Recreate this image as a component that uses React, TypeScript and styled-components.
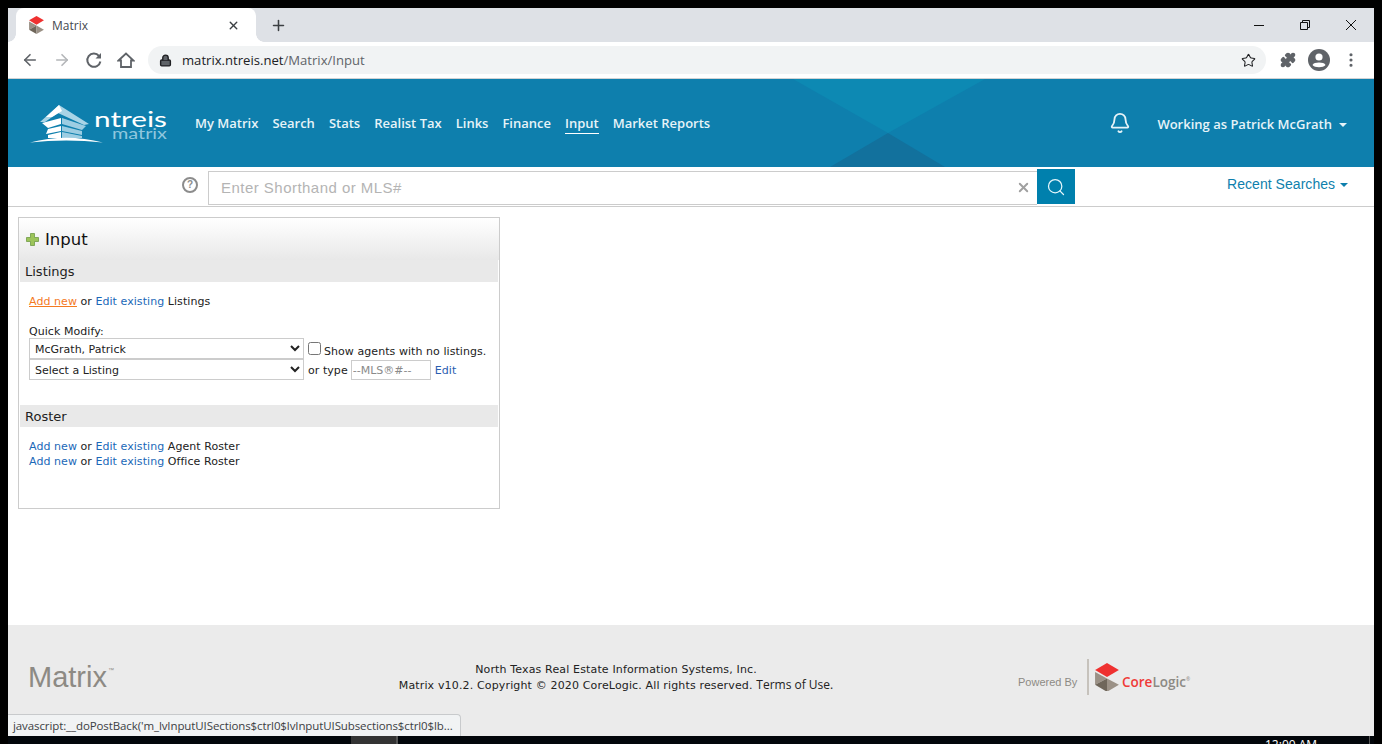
import React from 'react';
import styled, { createGlobalStyle } from 'styled-components';
import { ArrowLeft, ArrowRight, Bell, Lock, MoreVertical, Plus, Puzzle, Search, Star, X } from 'lucide-react';

const GlobalStyle = createGlobalStyle`
	html, body {
		margin: 0;
		padding: 0;
		background: #000;
	}

	body {
		font-family: "DejaVu Sans", Verdana, sans-serif;
		font-size: 11px;
		color: #222;
	}
`;

const Frame = styled.div`
	position: relative;
	display: flex;
	flex-direction: column;
	width: 1382px;
	height: 744px;
	padding: 8px 8px 0;
	box-sizing: border-box;
	background: #000;
	overflow: hidden;
`;

const TabStrip = styled.div`
	display: flex;
	align-items: flex-end;
	height: 34px;
	padding-left: 8px;
	background: #dee1e6;
	flex-shrink: 0;
`;

const Tab = styled.div`
	position: relative;
	display: flex;
	align-items: center;
	width: 240px;
	height: 34px;
	padding: 0 16px 0 13px;
	box-sizing: border-box;
	background: #fff;
	border-radius: 8px 8px 0 0;
	color: #45494f;
	font-family: "Open Sans", sans-serif;
	font-size: 12px;
	gap: 8px;

	&::before,
	&::after {
		content: '';
		position: absolute;
		bottom: 0;
		width: 8px;
		height: 8px;
	}

	&::before {
		left: -8px;
		background: radial-gradient(circle at 0 0, #dee1e6 7.5px, #fff 8px);
	}

	&::after {
		right: -8px;
		background: radial-gradient(circle at 100% 0, #dee1e6 7.5px, #fff 8px);
	}
`;

const TabTitle = styled.span`
	flex: 1;
`;

const NewTab = styled.div`
	display: flex;
	align-items: center;
	margin: 0 0 0 14px;
	height: 34px;
	color: #3c4043;
`;

const WindowControls = styled.div`
	display: flex;
	align-items: center;
	margin-left: auto;
	height: 34px;
	padding-right: 18px;
	gap: 36px;
`;

const Toolbar = styled.div`
	display: flex;
	align-items: center;
	height: 36px;
	background: #fff;
	border-bottom: 1px solid #d0d2d4;
	box-sizing: content-box;
	flex-shrink: 0;
	padding-left: 13px;
	color: #5f6368;
`;

const NavIcons = styled.div`
	display: flex;
	align-items: center;
	gap: 14px;
	width: 127px;
`;

const Omnibox = styled.div`
	display: flex;
	align-items: center;
	width: 1118px;
	height: 28px;
	padding: 0 10px 0 11px;
	box-sizing: border-box;
	background: #f1f3f4;
	border-radius: 14px;
	gap: 10px;
	font-family: "Open Sans", sans-serif;
	font-size: 13.1px;
	color: #202124;
`;

const UrlPath = styled.span`
	color: #5f6368;
`;

const OmniEnd = styled.div`
	margin-left: auto;
	display: flex;
`;

const ToolbarEnd = styled.div`
	display: flex;
	align-items: center;
	margin-left: 14px;
	gap: 12px;
`;

const Header = styled.header`
	position: relative;
	display: flex;
	align-items: center;
	height: 88px;
	padding: 0 27px 0 20px;
	background: #0e7fad;
	flex-shrink: 0;
	overflow: hidden;
`;

const HeaderArt = styled.svg`
	position: absolute;
	left: 772px;
	top: 0;
`;

const NtreisLogo = styled.svg`
	flex-shrink: 0;
	margin: 0 27px 0 0;
`;

const NavList = styled.nav`
	position: relative;
	display: flex;
	gap: 14px;
	margin-top: 2px;
	font-family: "Open Sans", sans-serif;
	font-size: 13px;
	font-weight: 600;
	color: #e6f3f8;
`;

const NavItem = styled.span<{ $active?: boolean }>`
	padding-bottom: 1px;
	border-bottom: 1px solid ${ ({ $active }) => $active ? '#fff' : 'transparent' };
`;

const UserArea = styled.div`
	position: relative;
	display: flex;
	align-items: center;
	margin-left: auto;
	gap: 26px;
	font-family: "Open Sans", sans-serif;
	font-size: 13px;
	font-weight: 600;
	color: #e6f3f8;
`;

const UserName = styled.span`
	display: flex;
	align-items: center;
	gap: 7px;
	margin-top: 2px;
`;

const Caret = styled.i<{ $color: string }>`
	display: inline-block;
	border-left: 4px solid transparent;
	border-right: 4px solid transparent;
	border-top: 4px solid ${ ({ $color }) => $color };
	margin-top: 2px;
`;

const SearchBar = styled.div`
	display: flex;
	align-items: flex-start;
	height: 40px;
	box-sizing: border-box;
	border-bottom: 1px solid #ccc;
	background: #fff;
	padding-left: 174px;
	flex-shrink: 0;
`;

const HelpMark = styled.div`
	width: 16px;
	height: 16px;
	margin: 10px 10px 0 0;
	border: 2px solid #8c8c8c;
	border-radius: 50%;
	box-sizing: border-box;
	color: #8c8c8c;
	font: bold 10px/12px "Liberation Sans", sans-serif;
	text-align: center;
`;

const ShorthandBox = styled.div`
	display: flex;
	align-items: center;
	width: 829px;
	height: 34px;
	margin-top: 4px;
	padding: 0 6px 2px 12px;
	box-sizing: border-box;
	border: 1px solid #ccc;
	border-right: none;
	color: #b4b4b4;
	font-family: "Liberation Sans", sans-serif;
	font-size: 15px;
`;

const ShorthandText = styled.span`
	flex: 1;
	letter-spacing: 0.47px;
`;

const SearchButton = styled.div`
	display: flex;
	align-items: center;
	justify-content: center;
	width: 38px;
	height: 35px;
	margin-top: 2px;
	background: #0080ad;
	color: #e6f6fb;
`;

const RecentSearches = styled.div`
	display: flex;
	align-items: center;
	gap: 5px;
	margin: 9px 0 0 152px;
	color: #0e7fad;
	font-family: "Liberation Sans", sans-serif;
	font-size: 14px;
	letter-spacing: 0.05px;
`;

const Content = styled.main`
	flex: 1;
	background: #fff;
	padding: 10px 0 0 10px;
`;

const Panel = styled.section`
	width: 482px;
	height: 292px;
	box-sizing: border-box;
	border: 1px solid #ccc;
`;

const PanelHeader = styled.div`
	display: flex;
	align-items: center;
	height: 42px;
	padding-left: 7px;
	gap: 6px;
	background: linear-gradient(#fff, #e8e8e8);
	color: #111;
	font-size: 16.5px;
`;

const SectionBar = styled.div`
	height: 22px;
	margin: 0 1px;
	padding-left: 5px;
	background: #e9e9e9;
	color: #222;
	font-size: 13px;
	line-height: 24px;
`;

const SectionBody = styled.div<{ $height: number }>`
	height: ${ ({ $height }) => $height }px;
	padding: 12px 0 0 10px;
	box-sizing: border-box;
	line-height: 15px;
	letter-spacing: 0.06px;
`;

const Line = styled.div`
	white-space: nowrap;
`;

const ActionLink = styled.a<{ $hover?: boolean }>`
	color: ${ ({ $hover }) => $hover ? '#f47a1f' : '#1a68b8' };
	text-decoration: ${ ({ $hover }) => $hover ? 'underline' : 'none' };
`;

const QuickLabel = styled.div`
	margin-top: 15px;
	height: 14px;
	line-height: 15px;
`;

const FormRow = styled.div`
	display: flex;
	align-items: center;
	height: 21px;
`;

const PlainSelect = styled.select`
	width: 275px;
	height: 21px;
	padding: 2px 0 0 1px;
	border: 1px solid #ccc;
	border-radius: 0;
	background: #fff;
	color: #222;
	font-family: "DejaVu Sans", sans-serif;
	font-size: 11px;
`;

const AgentCheck = styled.input`
	width: 13px;
	height: 13px;
	margin: 0 3px 0 4px;
`;

const AgentLabel = styled.span`
	padding-top: 6px;
`;

const OrType = styled.span`
	margin: 2px 3px 0 4px;
`;

const MlsInput = styled.input`
	width: 80px;
	height: 20px;
	padding: 1px 1px 0;
	box-sizing: border-box;
	border: 1px solid #ccc;
	font-family: "DejaVu Sans", sans-serif;
	font-size: 11px;

	&::placeholder {
		color: #8a8a8a;
	}
`;

const EditLink = styled.a`
	margin: 2px 0 0 4px;
	color: #2a5db0;
`;

const Footer = styled.footer`
	display: grid;
	grid-template-columns: 370px 436px auto;
	align-items: center;
	height: 111px;
	padding: 0 0 7px 20px;
	box-sizing: border-box;
	background: #ebebeb;
	flex-shrink: 0;
`;

const MatrixMark = styled.div`
	color: #8d8a84;
	font-family: "Liberation Sans", sans-serif;
	font-size: 29px;

	sup {
		font-size: 6px;
		vertical-align: 15px;
		margin-left: 1px;
	}
`;

const FooterText = styled.div`
	color: #222;
	font-size: 11px;
	line-height: 15px;
	letter-spacing: 0.15px;
	text-align: center;
	white-space: nowrap;
`;

const TermsLink = styled.a`
	font-family: "Open Sans", sans-serif;
	font-size: 12px;
	letter-spacing: 0;
`;

const PoweredBy = styled.div`
	display: flex;
	align-items: center;
	margin-left: 184px;
	color: #8d8a84;
	font-family: "Liberation Sans", sans-serif;
	font-size: 11px;
`;

const PoweredLabel = styled.span`
	width: 69px;
	margin-top: 10px;
`;

const PoweredDivider = styled.div`
	width: 2px;
	height: 36px;
	background: #c6c2bc;
	margin-right: 6px;
`;

const CoreLogicName = styled.span`
	margin: 10px 0 0 3px;
	color: #8d8a84;
	font-family: "Open Sans", sans-serif;
	font-size: 13.5px;
	font-weight: 600;
	white-space: nowrap;

	b {
		color: #ef3b39;
		font-weight: 600;
	}

	sup {
		font-size: 5px;
		font-weight: normal;
		vertical-align: 6px;
	}
`;

const StatusBubble = styled.div`
	position: absolute;
	left: 8px;
	bottom: 8px;
	width: 453px;
	height: 22px;
	padding-left: 5px;
	box-sizing: border-box;
	background: #f1f3f4;
	border-top: 1px solid #c8cacc;
	border-right: 1px solid #c8cacc;
	border-radius: 0 4px 0 0;
	color: #3c4043;
	font-family: "Open Sans", sans-serif;
	font-size: 11.5px;
	letter-spacing: -0.1px;
	line-height: 21px;
	white-space: nowrap;
`;

const TaskbarPeek = styled.div`
	position: relative;
	height: 8px;
	flex-shrink: 0;
	overflow: hidden;
	background: #02060a;
`;

const TaskbarButton = styled.div`
	position: absolute;
	left: 343px;
	top: 0;
	width: 45px;
	height: 8px;
	background: #333;
	border-right: 2px solid #555;
`;

const TaskbarEdge = styled.div`
	position: absolute;
	left: 1361px;
	top: 0;
	width: 1px;
	height: 8px;
	background: #555;
`;

const TaskbarClock = styled.div`
	position: absolute;
	left: 1257px;
	top: 2px;
	color: #fff;
	font-family: "Open Sans", sans-serif;
	font-size: 12px;
	line-height: 14px;
`;

const NAV_ITEMS = ['My Matrix', 'Search', 'Stats', 'Realist Tax', 'Links', 'Finance', 'Input', 'Market Reports'];

function CubeMark({ size }: { size: number }) {
	return (
		<svg width={ size } height={ size * 1.2 } viewBox="0 0 24 29">
			<polygon points="12,0 24,7 12,14 0,7" fill="#ef3130"/>
			<polygon points="0,9 12,15.5 0,22" fill="#9b9186"/>
			<polygon points="0,22 12,15.5 12,29" fill="#6f665a"/>
			<polygon points="12,15.5 24,22 12,29" fill="#9b9186"/>
		</svg>
	);
}

function NtreisMark() {
	return (
		<NtreisLogo width="140" height="46" viewBox="0 0 140 46">
			<polygon points="31,5 61,24 56,25 30,13 17,22 12,22" fill="#a9d4e6"/>
			<polygon points="31,5 34,11 24,17 18,17" fill="#fff"/>
			<polygon points="14,23 33,18 33,24 20,28" fill="#fff"/>
			<polygon points="34,18 58,26 54,30 34,24" fill="#9ccde2"/>
			<polygon points="20,29 33,26 33,31 18,34" fill="#fff"/>
			<polygon points="34,26 54,31 54,35 34,31" fill="#9ccde2"/>
			<polygon points="20,35 33,32 33,38 20,38" fill="#fff"/>
			<polygon points="34,32 54,36 54,38 34,38" fill="#9ccde2"/>
			<path d="M2 42.5 Q38 33 75 42.5 Q38 38.5 2 42.5 Z" fill="#fff"/>
			<text x="66" y="27" fill="#fff" fontFamily="Lato, sans-serif" fontSize="22" textLength="73" lengthAdjust="spacingAndGlyphs">ntreis</text>
			<text x="84" y="38.5" fill="#8fc7de" fontFamily="Lato, sans-serif" fontSize="15" textLength="55" lengthAdjust="spacingAndGlyphs">matrix</text>
		</NtreisLogo>
	);
}

export default function App() {
	return (
		<>
			<GlobalStyle/>
			<Frame>
				<TabStrip>
					<Tab>
						<CubeMark size={ 15 }/>
						<TabTitle>Matrix</TabTitle>
						<X size={ 13 } strokeWidth={ 2.6 } color="#3c4043"/>
					</Tab>
					<NewTab><Plus size={ 17 } strokeWidth={ 2.2 }/></NewTab>
					<WindowControls>
						<svg width="10" height="10" viewBox="0 0 10 10" fill="none" stroke="#111">
							<path d="M0 5.5 H10"/>
						</svg>
						<svg width="10" height="10" viewBox="0 0 10 10" fill="none" stroke="#111">
							<path d="M0.5 2.5 H7.5 V9.5 H0.5 Z M2.5 2.5 V0.5 H9.5 V7.5 H7.5"/>
						</svg>
						<svg width="10" height="10" viewBox="0 0 10 10" fill="none" stroke="#111">
							<path d="M0 0 L10 10 M10 0 L0 10"/>
						</svg>
					</WindowControls>
				</TabStrip>
				<Toolbar>
					<NavIcons>
						<ArrowLeft size={ 18 } strokeWidth={ 2.2 }/>
						<ArrowRight size={ 18 } strokeWidth={ 2.2 } color="#b4b6b9"/>
						<svg width="18" height="18" viewBox="0 0 18 18" fill="none">
							<path d="M14 5 A6.6 6.6 0 1 0 15.4 10.5" stroke="#5f6368" strokeWidth="2"/>
							<path d="M16 2 V7.5 H10.5 Z" fill="#5f6368"/>
						</svg>
						<svg width="18" height="18" viewBox="0 0 18 18" fill="none" stroke="#5f6368" strokeWidth="1.8">
							<path d="M1.5 9.5 L9 2.5 L16.5 9.5 H14 V16 H4 V9.5 Z"/>
						</svg>
					</NavIcons>
					<Omnibox>
						<Lock size={ 13 } strokeWidth={ 2.6 } fill="#5f6368"/>
						<span>matrix.ntreis.net<UrlPath>/Matrix/Input</UrlPath></span>
						<OmniEnd><Star size={ 15 } strokeWidth={ 1.7 }/></OmniEnd>
					</Omnibox>
					<ToolbarEnd>
						<Puzzle size={ 16 } fill="#5f6368"/>
						<svg width="22" height="22" viewBox="0 0 22 22">
							<circle cx="11" cy="11" r="11" fill="#5f6368"/>
							<circle cx="11" cy="8" r="3.6" fill="#fff"/>
							<path d="M4.5 16 C6 12.8 16 12.8 17.5 16 C15.5 19 6.5 19 4.5 16 Z" fill="#fff"/>
						</svg>
						<MoreVertical size={ 18 } strokeWidth={ 2.2 }/>
					</ToolbarEnd>
				</Toolbar>
				<Header>
					<HeaderArt width="240" height="88" viewBox="0 0 240 88">
						<polygon points="13,0 205,0 108,54" fill="#0d89b3"/>
						<polygon points="108,54 165,88 50,88" fill="#12719d"/>
					</HeaderArt>
					<NtreisMark/>
					<NavList>
						{ NAV_ITEMS.map((item) => (
							<NavItem key={ item } $active={ item === 'Input' }>{ item }</NavItem>
						)) }
					</NavList>
					<UserArea>
						<Bell size={ 22 } strokeWidth={ 2 }/>
						<UserName>Working as Patrick McGrath <Caret $color="#e6f3f8"/></UserName>
					</UserArea>
				</Header>
				<SearchBar>
					<HelpMark>?</HelpMark>
					<ShorthandBox>
						<ShorthandText>Enter Shorthand or MLS#</ShorthandText>
						<X size={ 15 } strokeWidth={ 3 } color="#a0a0a0"/>
					</ShorthandBox>
					<SearchButton><Search size={ 20 } strokeWidth={ 1.5 }/></SearchButton>
					<RecentSearches>Recent Searches <Caret $color="#0e7fad"/></RecentSearches>
				</SearchBar>
				<Content>
					<Panel>
						<PanelHeader>
							<svg width="13" height="13" viewBox="0 0 13 13">
								<path d="M4.5 0.5 H8.5 V4.5 H12.5 V8.5 H8.5 V12.5 H4.5 V8.5 H0.5 V4.5 H4.5 Z" fill="#9cc45a" stroke="#6f9a45" strokeWidth="0.8"/>
							</svg>
							Input
						</PanelHeader>
						<SectionBar>Listings</SectionBar>
						<SectionBody $height={ 123 }>
							<Line><ActionLink $hover>Add new</ActionLink> or <ActionLink>Edit existing</ActionLink> Listings</Line>
							<QuickLabel>Quick Modify:</QuickLabel>
							<FormRow>
								<PlainSelect defaultValue="a"><option value="a">McGrath, Patrick</option></PlainSelect>
								<AgentCheck type="checkbox"/>
								<AgentLabel>Show agents with no listings.</AgentLabel>
							</FormRow>
							<FormRow>
								<PlainSelect defaultValue="a"><option value="a">Select a Listing</option></PlainSelect>
								<OrType>or type</OrType>
								<MlsInput placeholder="--MLS®#--"/>
								<EditLink>Edit</EditLink>
							</FormRow>
						</SectionBody>
						<SectionBar>Roster</SectionBar>
						<SectionBody $height={ 80 }>
							<Line><ActionLink>Add new</ActionLink> or <ActionLink>Edit existing</ActionLink> Agent Roster</Line>
							<Line><ActionLink>Add new</ActionLink> or <ActionLink>Edit existing</ActionLink> Office Roster</Line>
						</SectionBody>
					</Panel>
				</Content>
				<Footer>
					<MatrixMark>Matrix<sup>™</sup></MatrixMark>
					<FooterText>
						North Texas Real Estate Information Systems, Inc.<br/>
						Matrix v10.2. Copyright © 2020 CoreLogic. All rights reserved. <TermsLink>Terms of Use.</TermsLink>
					</FooterText>
					<PoweredBy>
						<PoweredLabel>Powered By</PoweredLabel>
						<PoweredDivider/>
						<CubeMark size={ 24 }/>
						<CoreLogicName><b>Core</b>Logic<sup>®</sup></CoreLogicName>
					</PoweredBy>
				</Footer>
				<TaskbarPeek>
					<TaskbarButton/>
					<TaskbarClock>12:00 AM</TaskbarClock>
					<TaskbarEdge/>
				</TaskbarPeek>
				<StatusBubble>javascript:__doPostBack('m_lvInputUISections$ctrl0$lvInputUISubsections$ctrl0$lb...</StatusBubble>
			</Frame>
		</>
	);
}
